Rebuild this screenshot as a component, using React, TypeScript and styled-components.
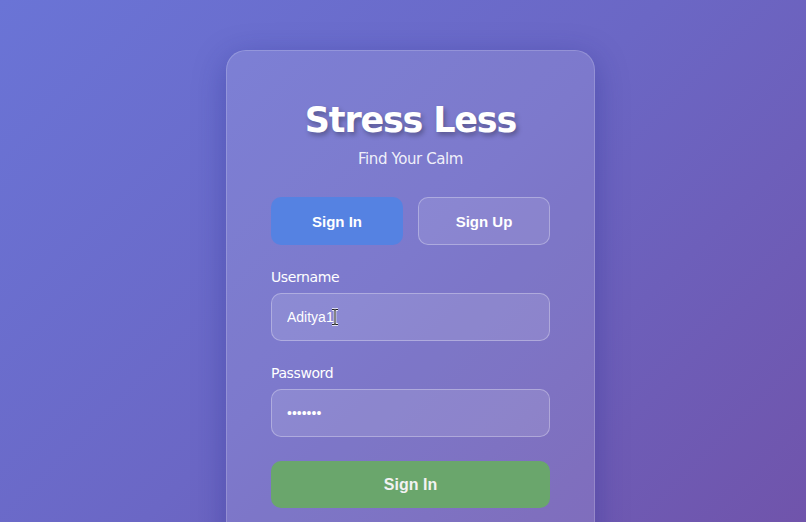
import styled, { createGlobalStyle } from "styled-components";

const GlobalStyle = createGlobalStyle`
  html, body {
    margin: 0;
    padding: 0;
    height: 100%;
    overflow: hidden;
  }
  body {
    font-family: "DejaVu Sans", Verdana, sans-serif;
  }
`;

function App() {
  return (
    <Page>
      <GlobalStyle />
      <Card>
        <Title>Stress Less</Title>
        <Subtitle>Find Your Calm</Subtitle>
        <Tabs>
          <Tab $active>Sign In</Tab>
          <Tab>Sign Up</Tab>
        </Tabs>
        <Field>
          <Label>Username</Label>
          <InputWrap>
            <Input type="text" defaultValue="Aditya1" />
            {/* text-select mouse pointer hovering over the field */}
            <Caret viewBox="0 0 8 18" width="8" height="18">
              <path
                d="M1 1.5 H3 Q4 1.5 4 3 V15 Q4 16.5 3 16.5 H1 M7 1.5 H5 Q4 1.5 4 3 M4 15 Q4 16.5 5 16.5 H7"
                fill="none"
                stroke="#fff"
                strokeWidth="2.6"
              />
              <path
                d="M1 1.5 H3 Q4 1.5 4 3 V15 Q4 16.5 3 16.5 H1 M7 1.5 H5 Q4 1.5 4 3 M4 15 Q4 16.5 5 16.5 H7"
                fill="none"
                stroke="#222"
                strokeWidth="1.1"
              />
            </Caret>
          </InputWrap>
        </Field>
        <Field>
          <Label>Password</Label>
          <Input type="password" defaultValue="1234567" />
        </Field>
        <Submit>Sign In</Submit>
      </Card>
    </Page>
  );
}

export default App;

const Page = styled.div`
  height: 522px;
  display: flex;
  justify-content: center;
  align-items: flex-start;
  padding-left: 15px;
  background: linear-gradient(135deg, #6a74d6 0%, #6b67c5 50%, #7054ab 100%);
`;

const Card = styled.div`
  width: 279px;
  margin-top: 50px;
  padding: 48px 44px 60px;
  border-radius: 20px;
  background: rgba(255, 255, 255, 0.12);
  border: 1px solid rgba(255, 255, 255, 0.18);
  box-shadow: 0 8px 32px rgba(31, 38, 135, 0.37);
  display: flex;
  flex-direction: column;
`;

const Title = styled.h1`
  margin: 0;
  text-align: center;
  color: #fff;
  font-family: "DejaVu Sans", Verdana, sans-serif;
  font-weight: 700;
  font-size: 35px;
  letter-spacing: -1.2px;
  line-height: 42px;
  text-shadow: 2px 3px 5px rgba(0, 0, 0, 0.3);
`;

const Subtitle = styled.p`
  margin: 8px 0 28px;
  text-align: center;
  color: rgba(255, 255, 255, 0.9);
  font-size: 15px;
  letter-spacing: -0.4px;
  line-height: 20px;
`;

const Tabs = styled.div`
  display: grid;
  grid-template-columns: 1fr 1fr;
  gap: 15px;
  margin-bottom: 24px;
`;

const Tab = styled.button<{ $active?: boolean }>`
  height: 48px;
  border-radius: 10px;
  border: 1px solid
    ${(p) => (p.$active ? "transparent" : "rgba(255, 255, 255, 0.3)")};
  background: ${(p) => (p.$active ? "#5582e2" : "rgba(255, 255, 255, 0.1)")};
  color: #fff;
  font-family: "Liberation Sans", Arial, sans-serif;
  font-weight: 700;
  font-size: 15px;
`;

const Field = styled.div`
  display: flex;
  flex-direction: column;
  gap: 7px;
  margin-bottom: 24px;
`;

const Label = styled.label`
  color: #fff;
  font-size: 14px;
  letter-spacing: -0.4px;
  line-height: 17px;
`;

const InputWrap = styled.div`
  position: relative;
`;

const Input = styled.input`
  display: block;
  width: 100%;
  box-sizing: border-box;
  height: 48px;
  padding: 0 15px;
  border-radius: 10px;
  border: 1px solid rgba(255, 255, 255, 0.3);
  background: rgba(255, 255, 255, 0.12);
  color: #fff;
  font-family: "Liberation Sans", Arial, sans-serif;
  font-size: 14px;
  outline: none;
`;

const Caret = styled.svg`
  position: absolute;
  left: 60px;
  top: 15px;
  pointer-events: none;
`;

const Submit = styled.button`
  height: 47px;
  border: none;
  border-radius: 10px;
  background: #6aa66c;
  color: #f2f2f2;
  font-family: "Liberation Sans", Arial, sans-serif;
  font-weight: 700;
  font-size: 16px;
`;
